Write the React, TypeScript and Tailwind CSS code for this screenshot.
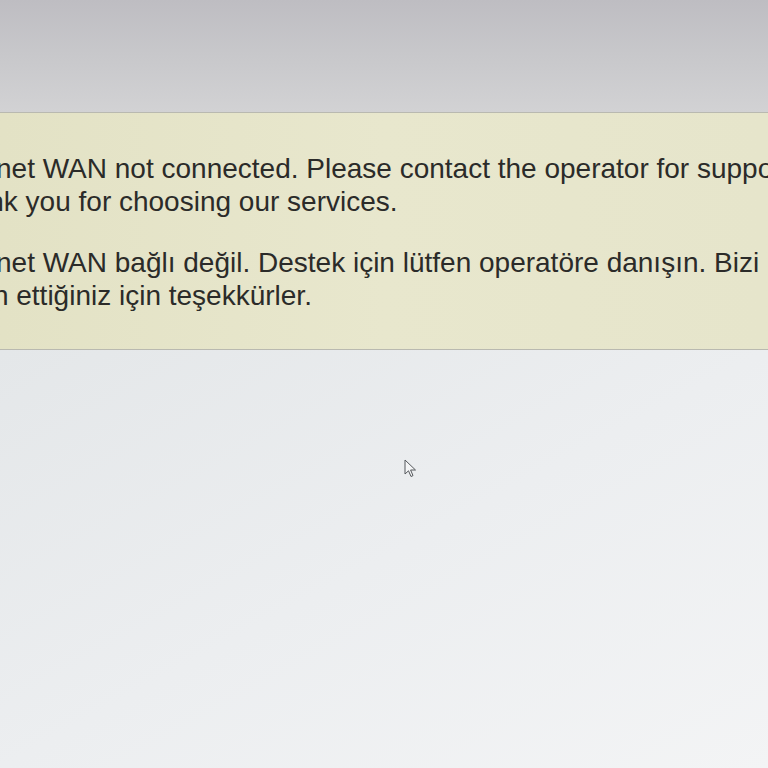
export default function App() {
  return (
    <div
      className="relative flex h-[768px] w-[768px] flex-col overflow-hidden bg-[#eceeef]"
      style={{ fontFamily: '"Liberation Sans", Arial, sans-serif' }}
    >
      <div className="h-[112px] shrink-0 bg-gradient-to-b from-[#bebdc2] via-[#c8c8cb] to-[#d2d2d4]" />
      <div className="h-[238px] shrink-0 overflow-hidden border-y border-[#b9b9b0] bg-gradient-to-r from-[#e3e2c5] via-[#e8e7cd] to-[#e6e5cb] pt-[40px] text-[28px] leading-[32.5px] text-[#2b2b29]">
        <div className="ml-[-60px] whitespace-nowrap">
          <p>Internet WAN not connected. Please contact the operator for support.</p>
          <p>Thank you for choosing our services.</p>
          <p className="mt-[29px]">İnternet WAN bağlı değil. Destek için lütfen operatöre danışın. Bizi</p>
          <p>tercih ettiğiniz için teşekkürler.</p>
        </div>
      </div>
      <div className="flex-1 bg-gradient-to-br from-[#e4e7e9] via-[#eceef0] to-[#f3f4f5]" />
      <svg
        className="absolute left-[404px] top-[459px]"
        width="14"
        height="20"
        viewBox="0 0 14 20"
      >
        <path
          d="M1 1 L1 15 L4.5 11.8 L7 17.5 L9 16.6 L6.6 11 L11.5 11 Z"
          fill="#f4f5f6"
          stroke="#55585c"
          strokeWidth="1"
          strokeLinejoin="round"
        />
      </svg>
    </div>
  );
}
